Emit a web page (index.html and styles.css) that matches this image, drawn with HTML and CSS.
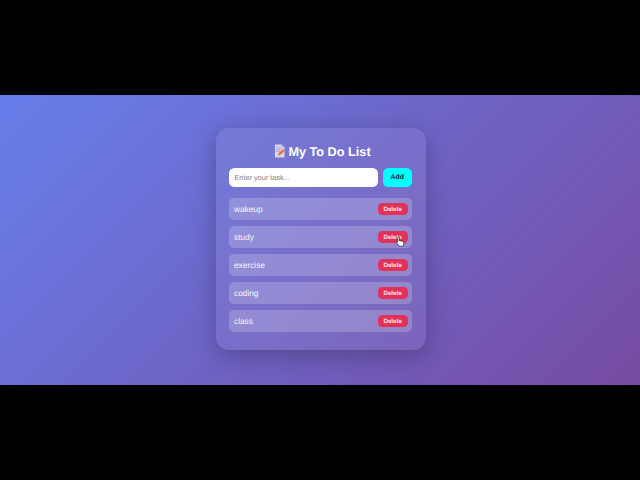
FILE: index.html
```html
<!DOCTYPE html>
<html lang="en">
<head>
<meta charset="utf-8">
<title>My To Do List</title>
<link rel="stylesheet" href="styles.css">
</head>
<body>
<main class="stage">
  <section class="card">
    <h1 class="title">
      <svg class="memo" viewBox="0 0 12 15" aria-hidden="true">
        <path d="M1 .5h7.500l3 3V14.500H1z" fill="#d8d2e8"/>
        <path d="M8.500 .5l3 3h-3z" fill="#a99fc4"/>
        <path d="M2.500 4h4.500M2.500 6h6.500M2.500 8h4" stroke="#a99fc4" stroke-width=".8"/>
        <path d="M4 13l1-3 5-4.500 1.700 1.600-5 4.800z" fill="#e8683a"/>
        <path d="M4 13l.7-2.100 1.600 1.300z" fill="#f3c9a0"/>
      </svg>
      My To Do List
    </h1>
    <div class="entry">
      <input class="task-input" type="text" placeholder="Enter your task...">
      <button class="add">Add</button>
    </div>
    <ul class="tasks">
      <li class="task"><span>wakeup</span><button class="delete">Delete</button></li>
      <li class="task"><span>study</span><button class="delete">Delete</button>
        <svg class="pointer" viewBox="0 0 12 15" aria-hidden="true">
          <path d="M3.500 1c.7 0 1.100.5 1.100 1.100v4.200l4 .8c1.200.3 1.900.9 1.900 2l-.4 3.300c-.1.8-.6 1.300-1.400 1.300H5c-.5 0-.9-.2-1.200-.6L1 9.400c-.4-.5-.3-1.100.2-1.500.4-.3 1-.2 1.200.1V2.100C2.400 1.500 2.900 1 3.500 1z" fill="#fff" stroke="#111" stroke-width=".9"/>
        </svg>
      </li>
      <li class="task"><span>exercise</span><button class="delete">Delete</button></li>
      <li class="task"><span>coding</span><button class="delete">Delete</button></li>
      <li class="task"><span>class</span><button class="delete">Delete</button></li>
    </ul>
  </section>
</main>
</body>
</html>
```
FILE: styles.css
```css
* { box-sizing: border-box; }
html, body { margin: 0; height: 480px; background: #000; overflow: hidden; }
body { padding: 95px 0; font-family: "Liberation Sans", Arial, sans-serif; text-rendering: geometricPrecision; }
.stage {
  height: 290px;
  background: linear-gradient(135deg, #667eea 0%, #764ba2 100%);
  display: flex;
  justify-content: center;
  padding: 33px 0 0 2px;
}
.card {
  width: 210px;
  height: 222px;
  padding: 14px 14px 13px 13px;
  border-radius: 13px;
  background: rgba(255, 255, 255, 0.07);
  box-shadow: 0 6px 24px rgba(0, 0, 0, 0.25);
}
.title {
  margin: 0 0 7.3px;
  height: 19px;
  padding-left: 4px;
  display: flex;
  align-items: center;
  justify-content: center;
  gap: 3px;
  font-size: 12.7px;
  line-height: 18px;
  font-weight: 700;
  color: #fff;
}
.memo { width: 11px; height: 14px; margin-bottom: 2px; }
.entry { display: flex; gap: 5px; margin-bottom: 11px; }
.task-input {
  flex: 1;
  min-width: 0;
  height: 18.7px;
  padding: 0 5.5px;
  border: 0;
  border-radius: 5.5px;
  background: #fff;
  font: 7.3px "Liberation Sans", Arial, sans-serif;
  text-rendering: geometricPrecision;
}
.task-input::placeholder { color: #808080; }
.add {
  width: 29.5px;
  height: 18.7px;
  padding: 0;
  border: 0;
  border-radius: 5.5px;
  background: #0ff;
  color: #0a2a30;
  font: 700 6.9px "Liberation Sans", Arial, sans-serif;
  text-rendering: geometricPrecision;
}
.tasks { list-style: none; margin: 0; padding: 0; display: flex; flex-direction: column; gap: 5.6px; }
.task {
  position: relative;
  height: 22.4px;
  padding: 0 4.5px 0 5px;
  display: flex;
  align-items: center;
  justify-content: space-between;
  border-radius: 5px;
  background: rgba(255, 255, 255, 0.2);
  color: #f8f6fc;
  font-size: 8.3px;
}
.delete {
  width: 29.5px;
  height: 12.5px;
  padding: 0;
  border: 0;
  border-radius: 4.5px;
  background: #e2325a;
  color: #f7e6ec;
  font: 700 6.2px "Liberation Sans", Arial, sans-serif;
  text-rendering: geometricPrecision;
}
.pointer { position: absolute; left: 167px; top: 9.5px; width: 9px; height: 13px; }
```
